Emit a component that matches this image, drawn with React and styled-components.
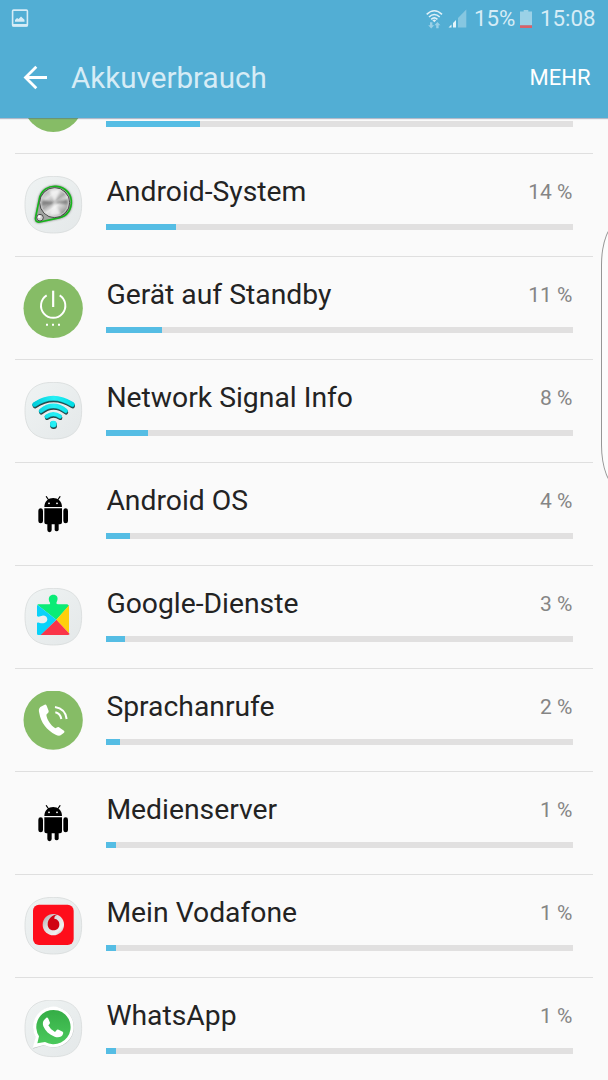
import React from "react";
import styled, { createGlobalStyle } from "styled-components";

const GlobalStyle = createGlobalStyle`
  html, body { margin: 0; padding: 0; overflow: hidden; background: #fafafa; }
  * { box-sizing: border-box; }
`;

const Screen = styled.main`
  position: relative;
  display: flex;
  flex-direction: column;
  width: 608px;
  height: 1080px;
  overflow: hidden;
  background: #fafafa;
  font-family: Roboto, "Liberation Sans", sans-serif;
`;

const Header = styled.header`
  flex: none;
  height: 118px;
  background: #52aed4;
  box-shadow: 0 1px 1px rgba(70, 90, 130, 0.4);
  z-index: 1;
`;

const StatusBar = styled.div`
  display: flex;
  align-items: center;
  height: 37px;
  padding: 0 13px 0 11px;
  color: #d6ecf6;
  font-size: 22.3px;
  line-height: 37px;
`;

const StatusIcons = styled.div`
  display: flex;
  align-items: center;
  margin-left: auto;
`;

const StatusText = styled.span`
  width: ${(p) => p.$width}px;
  margin-left: ${(p) => p.$gap}px;
  white-space: nowrap;
`;

const Spaced = styled.span`
  display: flex;
  margin-left: ${(p) => p.$gap}px;
`;

const AppBar = styled.div`
  display: flex;
  align-items: center;
  height: 81px;
  padding: 0 17.5px 0 23px;
`;

const BackButton = styled.button`
  display: flex;
  width: 26px;
  padding: 0;
  border: 0;
  background: none;
`;

const Title = styled.h1`
  margin: 0 auto 0 22px;
  color: #d6ecf6;
  font-size: 29.6px;
  font-weight: 400;
  line-height: 40px;
`;

const MoreButton = styled.button`
  padding: 0;
  border: 0;
  background: none;
  color: #fff;
  font: 400 22px/40px Roboto, "Liberation Sans", sans-serif;
`;

const List = styled.ul`
  flex: 1;
  min-height: 0;
  margin: 0;
  padding: 0 15px;
  overflow: hidden;
  list-style: none;
`;

const Row = styled.li`
  display: flex;
  height: 103px;
  padding: 22px 20.5px 0 8px;
  border-bottom: 1px solid #dfdfdf;

  &:first-child {
    margin-top: -67px;
  }
`;

const RowIcon = styled.svg`
  flex: none;
  width: 60px;
  height: 60px;
  margin-right: 23.4px;
`;

const RowBody = styled.div`
  flex: 1;
`;

const RowHeading = styled.div`
  display: flex;
  justify-content: space-between;
  height: 32px;
`;

const AppName = styled.span`
  color: #232323;
  font-size: 28.3px;
  line-height: 32px;
`;

const Percent = styled.span`
  color: #858585;
  font-size: 21px;
  line-height: 32px;
`;

const Track = styled.div`
  height: 6px;
  margin-top: 16px;
  background: #e1e0e0;
`;

const Fill = styled.div`
  height: 100%;
  background: #55bde4;
`;

const EdgeHandle = styled.div`
  position: absolute;
  top: 223px;
  left: 601px;
  width: 40px;
  height: 264px;
  border: 1px solid #969696;
  border-radius: 17px / 42px;
  background: #fcfcfc;
`;

const Plate = () => (
  <>
    <defs>
      <linearGradient id="plate" x1="0" y1="0" x2="1" y2="1">
        <stop offset="0" stopColor="#eff3f3" />
        <stop offset="1" stopColor="#e4e8e9" />
      </linearGradient>
    </defs>
    <path
      d="M118 34C175 34 203 60 203 119S175 204 118 204S33 178 33 119S61 34 118 34Z"
      fill="url(#plate)"
      stroke="#d9dcdc"
      strokeWidth="2.5"
    />
  </>
);

const Disc = () => <circle cx="117.5" cy="121" r="89" fill="#86bc66" />;

const ScreenIcon = () => (
  <RowIcon viewBox="27 33 180 180">
    <Disc />
  </RowIcon>
);

const SystemIcon = () => (
  <RowIcon viewBox="27 33 180 180">
    <defs>
      <linearGradient id="steel" x1="0.1" y1="0" x2="0.8" y2="1">
        <stop offset="0" stopColor="#8f8f8f" />
        <stop offset="0.3" stopColor="#dcdcdc" />
        <stop offset="0.48" stopColor="#aaa" />
        <stop offset="0.62" stopColor="#e8e8e8" />
        <stop offset="1" stopColor="#777" />
      </linearGradient>
      <filter id="glow" x="-20%" y="-20%" width="140%" height="140%">
        <feGaussianBlur stdDeviation="3" />
      </filter>
      <filter id="brushed" x="-10%" y="-10%" width="120%" height="120%">
        <feGaussianBlur stdDeviation="2.5" />
      </filter>
    </defs>
    <Plate />
    <path d="M77 97C83 75 103 62 127 64C156 66 174 89 172 116C169 145 149 158 124 161L78 171C67 173 62 166 65 156Z" fill="#777" stroke="#777" strokeWidth="5" filter="url(#glow)" />
    <path d="M77 97C83 75 103 62 127 64C156 66 174 89 172 116C169 145 149 158 124 161L78 171C67 173 62 166 65 156Z" fill="#a2a5a2" stroke="#15b51b" strokeWidth="5" />
    <circle cx="122" cy="113" r="45" fill="url(#steel)" stroke="#343434" strokeWidth="2.5" />
    <circle cx="122" cy="113" r="41" fill="none" stroke="#d8d8d8" strokeWidth="2" />
    <g filter="url(#brushed)">
      <path d="M122 113L84 104Q80 112 84 123ZM122 113L160 101Q164 109 160 119Z" fill="#555" opacity=".6" />
      <path d="M122 113L106 77Q121 70 138 78ZM122 113L106 149Q123 156 141 148Z" fill="#f8f8f8" opacity=".75" />
    </g>
    <circle cx="78" cy="158" r="10" fill="#d0d0d0" stroke="#343434" strokeWidth="2.5" />
    <circle cx="76" cy="155" r="4" fill="#fff" />
  </RowIcon>
);

const StandbyIcon = () => (
  <RowIcon viewBox="27 33 180 180">
    <Disc />
    <g fill="none" stroke="#fff">
      <path d="M98 82A36.5 36.5 0 1 0 137 82" strokeWidth="5.8" />
      <path d="M117.5 68V117" strokeWidth="6.5" />
    </g>
    <path d="M96 167h6v6h-6zM114 167h6v6h-6zM132 167h6v6h-6z" fill="#fff" />
  </RowIcon>
);

const arcs = (
  <>
    <path d="M62 101Q117 64 175 101" strokeWidth="14" />
    <path d="M81 120Q118 91 155 120" strokeWidth="13" />
    <path d="M98 137Q118 123 138 137" strokeWidth="12" />
    <path d="M118 160v.1" strokeWidth="20" />
  </>
);

const SignalIcon = () => (
  <RowIcon viewBox="27 33 180 180">
    <defs>
      <linearGradient id="cyan" gradientUnits="userSpaceOnUse" x1="60" y1="0" x2="180" y2="0">
        <stop offset="0" stopColor="#00cddb" />
        <stop offset="0.5" stopColor="#26f0f5" />
        <stop offset="1" stopColor="#00dce5" />
      </linearGradient>
    </defs>
    <Plate />
    <g fill="none" strokeLinecap="round">
      <g stroke="#303c3c" transform="translate(1 4)">{arcs}</g>
      <g stroke="#087b84" transform="translate(0 1)">{arcs}</g>
      <g stroke="url(#cyan)" transform="translate(0 -1)">{arcs}</g>
    </g>
  </RowIcon>
);

const AndroidIcon = () => (
  <RowIcon viewBox="27 33 180 180">
    <path d="M91 99C91 63 144 63 144 99Z" />
    <path d="M97 68L104 78M138 68L131 78" stroke="#000" strokeWidth="3.5" strokeLinecap="round" />
    <path d="M91 103H144V145Q144 151 138 151H134V168A6.5 6.5 0 0 1 122 168V151H113V168A6.5 6.5 0 0 1 100 168V151H97Q91 151 91 145Z" />
    <rect x="73" y="103" width="14" height="45" rx="7" />
    <rect x="148" y="103" width="14" height="45" rx="7" />
    <circle cx="105" cy="88" r="2.7" fill="#fff" />
    <circle cx="129" cy="88" r="2.7" fill="#fff" />
  </RowIcon>
);

const PlayServicesIcon = () => (
  <RowIcon viewBox="27 33 180 180">
    <Plate />
    <path d="M71 82H104C109 82 110 78 106 74C101 60 109 53 118 53C128 53 134 61 129 73C126 78 127 82 132 82H160L165 86L127 128L71 84Z" fill="#0aec76" />
    <path d="M165 85V169L127 128Z" fill="#ffcf0c" />
    <path d="M127 128L167 171Q165 174 161 174H75L83 170Z" fill="#fa3549" />
    <path d="M71 84L127 128L80 174H73Q69 174 69 170V138C74 134 77 139 84 139C95 139 100 133 100 127C100 119 93 115 85 116C78 116 75 122 69 117V86Z" fill="#09d2f9" />
  </RowIcon>
);

const CallIcon = () => (
  <RowIcon viewBox="27 33 180 180">
    <circle cx="117.5" cy="120" r="89" fill="#86bc66" />
    <path d="M79 81L92 74Q96 73 98 77L104 93Q105 97 101 100L97 104C99 120 110 135 124 145L130 142Q134 140 137 143L150 152Q153 155 150 158L140 166Q134 169 125 164C99 152 80 127 76 100Q72 87 79 81Z" fill="#fff" />
    <path d="M124 97Q139 101 142 117M123 81Q154 86 158 117" fill="none" stroke="#fff" strokeWidth="6" />
  </RowIcon>
);

const VodafoneIcon = () => (
  <RowIcon viewBox="27 33 180 180">
    <defs>
      <linearGradient id="silver" x1="0" y1="0" x2="1" y2="1">
        <stop offset="0" stopColor="#aaa" />
        <stop offset="0.4" stopColor="#dedede" />
        <stop offset="0.75" stopColor="#f0f0f0" />
        <stop offset="1" stopColor="#b7a6a6" />
      </linearGradient>
    </defs>
    <Plate />
    <rect x="57" y="56" width="122" height="121" rx="18" fill="#fe0d1b" />
    <circle cx="118" cy="116" r="32" fill="url(#silver)" />
    <path d="M134 86C122 86 121 93 121 98C130 99 137 106 136 117C135 127 128 133 118 133C107 133 101 125 101 115C101 99 116 84 134 86Z" fill="#d00512" />
  </RowIcon>
);

const WhatsAppIcon = () => (
  <RowIcon viewBox="27 45 180 180">
    <defs>
      <linearGradient id="chat" x1="0" y1="0" x2="0" y2="1">
        <stop offset="0" stopColor="#35ad46" />
        <stop offset="1" stopColor="#4bc95c" />
      </linearGradient>
    </defs>
    <g transform="translate(0 11)"><Plate /></g>
    <path d="M57 191L66 157A61 61 0 1 1 91 181Z" fill="#bfc4c3" />
    <path d="M56 189L65 156A61 61 0 1 1 90 180Z" fill="#fff" />
    <path d="M70 175L75 154A51.5 51.5 0 1 1 93 171Z" fill="url(#chat)" />
    <path d="M91 104L97 98Q101 97 103 101L108 113Q108 116 103 121Q109 134 123 141L129 134Q131 133 134 134L146 140Q149 142 147 147C144 157 132 159 122 155C105 149 94 138 88 124Q84 111 91 104Z" fill="#fff" />
  </RowIcon>
);

const PictureGlyph = () => (
  <svg width="18" height="19" viewBox="0 0 18 19">
    <rect x="1.6" y="1.1" width="14.8" height="15.8" rx="1" fill="none" stroke="#d6ecf6" strokeWidth="1.6" />
    <path d="M1 15h16v1.5q0 1-1 1H2q-1 0-1-1zM4 12.7V11l2-2 1.6 1L10 7.6l3.5 3.2V12.7z" fill="#d6ecf6" />
  </svg>
);

const WifiGlyph = () => (
  <svg width="17" height="20" viewBox="0 0 17 20">
    <g fill="none" stroke="#e0f1f8" strokeWidth="1.6">
      <path d="M.7 5.3Q8.3-1.8 16 5.3M3 8Q8.3 3 13.7 8M5.2 10.4Q8.3 7.5 11.4 10.4" />
    </g>
    <path d="M6.4 11.2Q8.3 9.6 10.2 11.2L8.3 13.2Z" fill="#e0f1f8" />
    <path d="M4 13.2h2.4v3h1.8l-3 3.2-3-3.2H4zM10.2 19.2h2.4v-3h1.8l-3-3.2-3 3.2h1.8z" fill="#9ad0e7" />
  </svg>
);

const SignalGlyph = () => (
  <svg width="19" height="19" viewBox="0 0 19 19">
    <path d="M10 9L18.3.5V18.5H10Z" fill="#86c7e1" />
    <path d="M.5 18.5L3.5 15.5V18.5ZM5 14L8 11V18.5H5Z" fill="#e4f4fa" />
  </svg>
);

const BatteryGlyph = () => (
  <svg width="12" height="18" viewBox="0 0 12 18">
    <path d="M3.7 0h4.6v1.5H12v14H0v-14h3.7z" fill="#9bd1e7" />
    <path d="M0 15.3h12V18H0z" fill="#d96068" />
  </svg>
);

const consumers = [
  { name: "Bildschirm", percent: 20, fill: 20, Icon: ScreenIcon },
  { name: "Android-System", percent: 14, fill: 15, Icon: SystemIcon },
  { name: "Gerät auf Standby", percent: 11, fill: 12, Icon: StandbyIcon },
  { name: "Network Signal Info", percent: 8, fill: 9, Icon: SignalIcon },
  { name: "Android OS", percent: 4, fill: 5, Icon: AndroidIcon },
  { name: "Google-Dienste", percent: 3, fill: 4, Icon: PlayServicesIcon },
  { name: "Sprachanrufe", percent: 2, fill: 3, Icon: CallIcon },
  { name: "Medienserver", percent: 1, fill: 2, Icon: AndroidIcon },
  { name: "Mein Vodafone", percent: 1, fill: 2, Icon: VodafoneIcon },
  { name: "WhatsApp", percent: 1, fill: 2, Icon: WhatsAppIcon },
];

export default function App() {
  return (
    <>
      <GlobalStyle />
      <Screen>
        <Header>
          <StatusBar>
            <PictureGlyph />
            <StatusIcons>
              <WifiGlyph />
              <Spaced $gap={5}><SignalGlyph /></Spaced>
              <StatusText $gap={7} $width={42}>15%</StatusText>
              <Spaced $gap={4}><BatteryGlyph /></Spaced>
              <StatusText $gap={8} $width={55}>15:08</StatusText>
            </StatusIcons>
          </StatusBar>
          <AppBar>
            <BackButton aria-label="Zurück">
              <svg width="26" height="26" viewBox="0 0 26 26">
                <path d="M24 12.5H3M13.3 1.8L2.5 12.5L13.3 23.2" fill="none" stroke="#fff" strokeWidth="2.8" />
              </svg>
            </BackButton>
            <Title>Akkuverbrauch</Title>
            <MoreButton>MEHR</MoreButton>
          </AppBar>
        </Header>
        <List>
          {consumers.map(({ name, percent, fill, Icon }, index) => (
            <Row key={name}>
              <Icon />
              <RowBody>
                <RowHeading>
                  {index > 0 && <AppName>{name}</AppName>}
                  {index > 0 && <Percent>{percent} %</Percent>}
                </RowHeading>
                <Track>
                  <Fill style={{ width: `${fill}%` }} />
                </Track>
              </RowBody>
            </Row>
          ))}
        </List>
        <EdgeHandle />
      </Screen>
    </>
  );
}
